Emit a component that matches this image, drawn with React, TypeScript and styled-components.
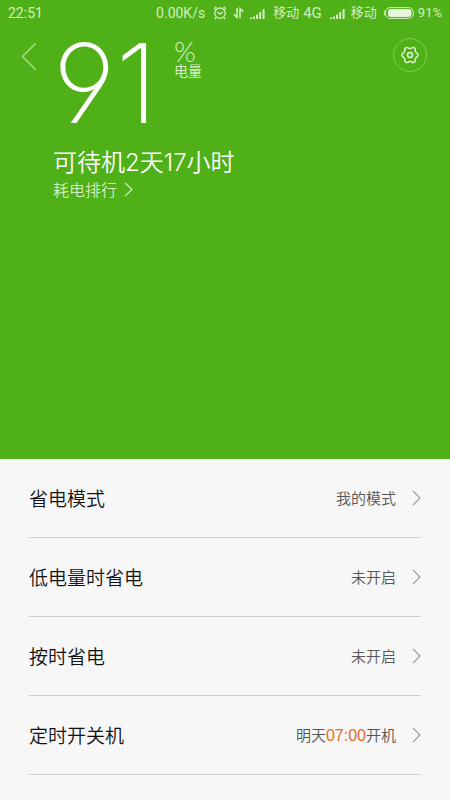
import React from "react";
import styled, { createGlobalStyle } from "styled-components";

const GlobalStyle = createGlobalStyle`
  *, *::before, *::after { box-sizing: border-box; }
  body {
    margin: 0;
    background: #f7f7f7;
    font-family: Roboto, "Noto Sans CJK SC", sans-serif;
    color: #111;
  }
  button { font: inherit; color: inherit; border: 0; padding: 0; background: none; cursor: pointer; }
  svg { display: block; flex: none; }
`;

const Hero = styled.header`
  min-height: 459px;
  background: #4fb017;
  color: #fff;
`;

const StatusBar = styled.div`
  display: flex;
  align-items: center;
  justify-content: space-between;
  height: 26px;
  padding: 0 8px;
  font-size: 14px;
  line-height: 26px;
  color: #d3efc1;
`;

const StatusGroup = styled.div`
  display: flex;
  align-items: center;
`;

const StatusItem = styled.span<{ $gap?: number; $size?: number }>`
  margin-left: ${(p) => p.$gap ?? 8}px;
  font-size: ${(p) => p.$size ?? 14}px;
`;

const TopRow = styled.div`
  display: flex;
  align-items: flex-start;
  padding: 12px 23px 0 21px;
`;

const BackButton = styled.button`
  width: 32px;
  padding-top: 4px;
`;

const Level = styled.div`
  display: flex;
  flex: 1;
  align-items: flex-start;
  gap: 16px;
`;

const LevelNumber = styled.div`
  width: 105px;
  font-family: Inter, sans-serif;
  font-size: 110px;
  line-height: 91px;
  font-weight: 250;
  font-feature-settings: "ss01";
  white-space: nowrap;
`;

const LevelUnit = styled.div`
  display: flex;
  flex-direction: column;
  color: #d3efc1;
`;

const Percent = styled.span`
  font-family: Lato, sans-serif;
  font-size: 28px;
  line-height: 26px;
  font-weight: 300;
`;

const UnitLabel = styled.span`
  font-size: 14px;
  line-height: 14px;
`;

const SettingsButton = styled.button`
  display: flex;
  align-items: center;
  justify-content: center;
  width: 34px;
  height: 34px;
  border: 1px solid #83cc58;
  border-radius: 50%;
`;

const Summary = styled.div`
  display: flex;
  flex-direction: column;
  align-items: flex-start;
  padding: 19px 53px 0;
  font-family: "Noto Sans CJK SC", sans-serif;
  font-weight: 350;
`;

const Standby = styled.h1`
  margin: 0;
  font-family: Inter, "Noto Sans CJK SC", sans-serif;
  font-size: 24px;
  line-height: 30px;
  font-weight: inherit;
`;

const RankingLink = styled.a`
  display: flex;
  align-items: center;
  gap: 7px;
  font-size: 16px;
  line-height: 22px;
  color: #d3efc1;
  text-decoration: none;
`;

const List = styled.main`
  display: flex;
  flex-direction: column;
  padding: 0 29px;
`;

const Row = styled.button`
  display: flex;
  align-items: center;
  height: 79px;
  border-bottom: 1px solid #cfcfcf;
  font-family: "Noto Sans CJK SC", sans-serif;
  font-weight: 350;
  text-align: left;
`;

const RowTitle = styled.span`
  flex: 1;
  font-size: 19px;
  line-height: 28px;
`;

const RowValue = styled.span`
  margin-right: 16px;
  font-size: 15px;
  line-height: 22px;
  color: #555;
`;

const Time = styled.span`
  font-family: "Liberation Sans", sans-serif;
  font-size: 16px;
  color: #ea6c1c;
`;

const Chevron = ({ width, height, color }: { width: number; height: number; color: string }) => (
  <svg width={width} height={height} viewBox={`0 0 ${width} ${height}`} fill="none" stroke={color} strokeWidth="1.1">
    <path d={`M1 1L${width - 1} ${height / 2}L1 ${height - 1}`} />
  </svg>
);

const BackIcon = () => (
  <svg width="16" height="28" viewBox="0 0 16 28" fill="none" stroke="#a4da84" strokeWidth="1.5">
    <path d="M14.5 1.5L1.5 14.5L14.5 27.5" />
  </svg>
);

const StatusIcon = styled.svg<{ $gap?: number }>`
  margin-left: ${(p) => p.$gap ?? 8}px;
`;

const AlarmIcon = () => (
  <StatusIcon width="14" height="14" viewBox="0 0 14 14" fill="none" stroke="currentColor" strokeWidth="1.3">
    <circle cx="7" cy="7.2" r="5.2" />
    <path d="M4.4 6L7 8.2L9.6 6M0.8 3.2L3.4 1M13.2 3.2L10.6 1M3 11.4L1.8 13M11 11.4L12.2 13" />
  </StatusIcon>
);

const DataIcon = () => (
  <StatusIcon $gap={6} width="11" height="12" viewBox="0 0 11 12" fill="none" stroke="currentColor" strokeWidth="1.6">
    <path d="M4 1V10.4L0.8 7.4M7 11V1.6L10.2 4.6" />
  </StatusIcon>
);

const SignalIcon = ({ gap }: { gap?: number }) => (
  <StatusIcon $gap={gap} width="15" height="11" viewBox="0 0 15 11" fill="currentColor">
    <path d="M0 9.5h2v1.5H0zM3 8.5h2V11H3zM6 6.5h2V11H6zM9.2 4h2v7h-2zM12.6 1h2v10h-2z" />
  </StatusIcon>
);

const BatteryIcon = () => (
  <StatusIcon $gap={6} width="31" height="12" viewBox="0 0 31 12" fill="none">
    <rect x="2.5" y="0.6" width="27.8" height="10.8" rx="4.5" stroke="currentColor" />
    <path d="M2 3.5Q0.3 6 2 8.5" stroke="currentColor" />
    <rect x="5" y="2" width="23.5" height="8" rx="3" fill="#e6f6da" />
  </StatusIcon>
);

const GearIcon = () => (
  <svg width="18" height="18" viewBox="0 0 18 18" fill="none" stroke="#e4f5d9" strokeWidth="1.4" strokeLinejoin="round">
    <path d="M5.6 1.4Q6.8 1.1 7.4 2.2Q9 3 10.6 2.2Q11.2 1.1 12.4 1.4L14 2.4Q14.4 3 14.1 4.2Q14.2 6 15.8 6.9Q17 7.4 17 9Q17 10.6 15.8 11.1Q14.2 12 14.1 13.8Q14.4 15 14 15.6L12.4 16.6Q11.2 16.9 10.6 15.8Q9 15 7.4 15.8Q6.8 16.9 5.6 16.6L4 15.6Q3.6 15 3.9 13.8Q3.8 12 2.2 11.1Q1 10.6 1 9Q1 7.4 2.2 6.9Q3.8 6 3.9 4.2Q3.6 3 4 2.4Z" />
    <circle cx="9" cy="9" r="2.5" />
  </svg>
);

const rows: { title: string; value: React.ReactNode }[] = [
  { title: "省电模式", value: "我的模式" },
  { title: "低电量时省电", value: "未开启" },
  { title: "按时省电", value: "未开启" },
  { title: "定时开关机", value: <>明天<Time>07:00</Time>开机</> },
];

export default function App() {
  return (
    <>
      <GlobalStyle />
      <Hero>
        <StatusBar>
          <span>22:51</span>
          <StatusGroup>
            <StatusItem>0.00K/s</StatusItem>
            <AlarmIcon />
            <DataIcon />
            <SignalIcon gap={6} />
            <StatusItem $size={13}>移动</StatusItem>
            <StatusItem $gap={4} $size={15}>4G</StatusItem>
            <SignalIcon />
            <StatusItem $gap={6} $size={13}>移动</StatusItem>
            <BatteryIcon />
            <StatusItem $gap={4} $size={13}>91%</StatusItem>
          </StatusGroup>
        </StatusBar>
        <TopRow>
          <BackButton aria-label="返回"><BackIcon /></BackButton>
          <Level>
            <LevelNumber>91</LevelNumber>
            <LevelUnit>
              <Percent>%</Percent>
              <UnitLabel>电量</UnitLabel>
            </LevelUnit>
          </Level>
          <SettingsButton aria-label="设置"><GearIcon /></SettingsButton>
        </TopRow>
        <Summary>
          <Standby>可待机2天17小时</Standby>
          <RankingLink href="#ranking">
            耗电排行
            <Chevron width={9} height={15} color="#d3efc1" />
          </RankingLink>
        </Summary>
      </Hero>
      <List>
        {rows.map((row) => (
          <Row key={row.title}>
            <RowTitle>{row.title}</RowTitle>
            <RowValue>{row.value}</RowValue>
            <Chevron width={9} height={16} color="#999" />
          </Row>
        ))}
      </List>
    </>
  );
}
